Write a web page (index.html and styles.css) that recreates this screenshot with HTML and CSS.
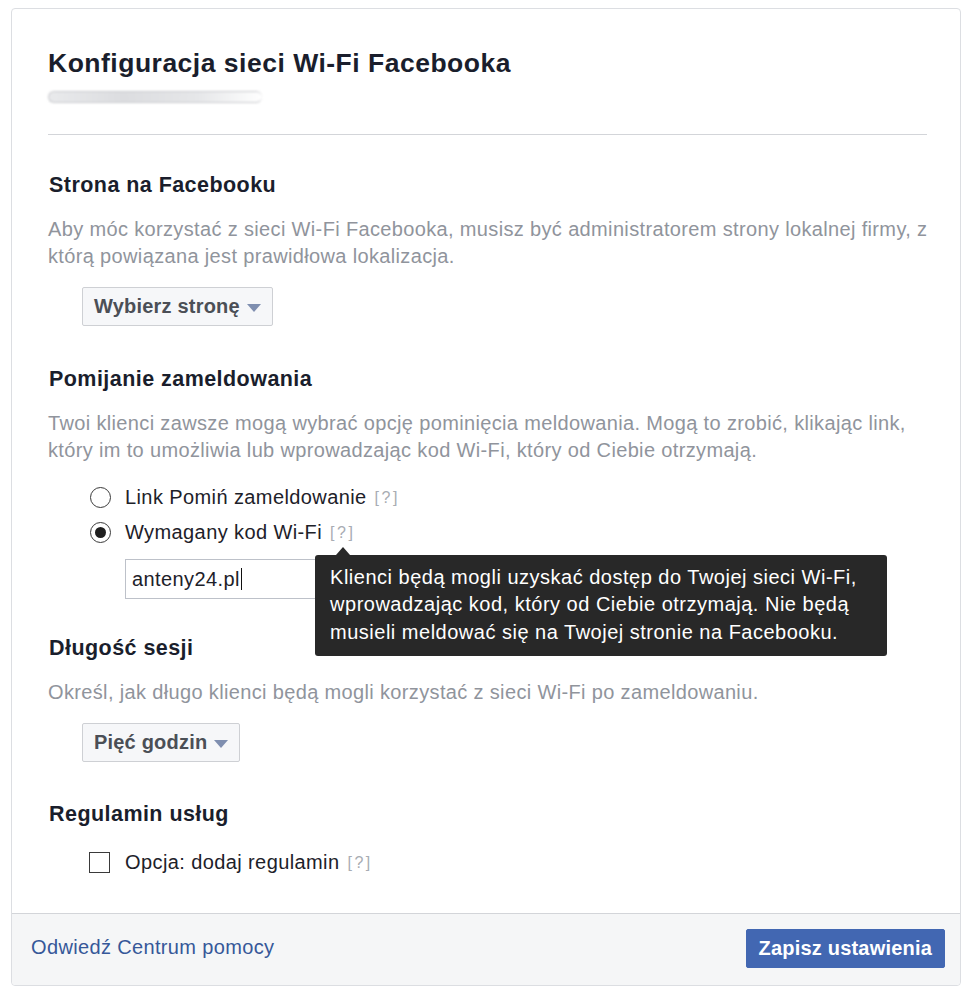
FILE: index.html
```html
<!DOCTYPE html>
<html lang="pl">
<head>
<meta charset="utf-8">
<title>Konfiguracja sieci Wi-Fi Facebooka</title>
<link rel="stylesheet" href="styles.css">
</head>
<body>
<div class="card">
  <div class="card-body">
    <div class="header">
      <h1 class="title">Konfiguracja sieci Wi-Fi Facebooka</h1>
      <div class="blurred"></div>
    </div>

    <section class="section first">
      <h2 class="section-title">Strona na Facebooku</h2>
      <p class="desc">Aby móc korzystać z sieci Wi-Fi Facebooka, musisz być administratorem strony lokalnej firmy, z którą powiązana jest prawidłowa lokalizacja.</p>
      <button class="dropdown">Wybierz stronę <span class="caret"></span></button>
    </section>

    <section class="section second">
      <h2 class="section-title">Pomijanie zameldowania</h2>
      <p class="desc">Twoi klienci zawsze mogą wybrać opcję pominięcia meldowania. Mogą to zrobić, klikając link, który im to umożliwia lub wprowadzając kod Wi-Fi, który od Ciebie otrzymają.</p>
      <div class="options">
        <label class="option">
          <span class="radio"></span>
          <span class="label">Link Pomiń zameldowanie</span>
          <span class="help">[?]</span>
        </label>
        <label class="option">
          <span class="radio checked"></span>
          <span class="label">Wymagany kod Wi-Fi</span>
          <span class="help anchor">[?]
            <span class="tooltip">Klienci będą mogli uzyskać dostęp do Twojej sieci Wi-Fi, wprowadzając kod, który od Ciebie otrzymają. Nie będą musieli meldować się na Twojej stronie na Facebooku.</span>
          </span>
        </label>
        <div class="code-input"><span class="code-text">anteny24.pl</span><span class="cursor"></span></div>
      </div>
    </section>

    <section class="section third">
      <h2 class="section-title">Długość sesji</h2>
      <p class="desc">Określ, jak długo klienci będą mogli korzystać z sieci Wi-Fi po zameldowaniu.</p>
      <button class="dropdown">Pięć godzin <span class="caret"></span></button>
    </section>

    <section class="section last">
      <h2 class="section-title">Regulamin usług</h2>
      <label class="option check-option">
        <span class="checkbox"></span>
        <span class="label">Opcja: dodaj regulamin</span>
        <span class="help">[?]</span>
      </label>
    </section>
  </div>

  <div class="footer">
    <a class="help-link" href="#">Odwiedź Centrum pomocy</a>
    <button class="primary">Zapisz ustawienia</button>
  </div>
</div>
</body>
</html>
```

FILE: styles.css
```css
* { box-sizing: border-box; }

body {
  margin: 0;
  background: #ffffff;
  font-family: "Liberation Sans", Arial, sans-serif;
  color: #1d2129;
}

.card {
  margin: 8px 0 0 11px;
  width: 950px;
  border: 1px solid #dcdee2;
  border-radius: 4px;
}

.card-body {
  padding: 39px 33px 0 36px;
}

.header {
  border-bottom: 1px solid #d3d5d9;
  padding-bottom: 31px;
}

.title {
  margin: 0;
  font-size: 26.5px;
  letter-spacing: 0.5px;
  line-height: 30px;
  font-weight: bold;
  color: #1a1e2c;
}

.blurred {
  margin-top: 13px;
  width: 214px;
  height: 12px;
  border-radius: 6px;
  border: 1.5px solid #c8c9cd;
  border-right: none;
  background: linear-gradient(to right, #e9eaec 0%, #dcdde0 35%, #e6e7e9 70%, #ffffff 100%);
  filter: blur(0.9px);
}

.section { padding-top: 36px; }
.section.first { padding-top: 38px; }
.section.second { padding-top: 41px; }
.section.third { padding-top: 37px; }
.section.last { padding-top: 40px; padding-bottom: 33px; }

.section-title {
  margin: 0 0 0 1px;
  font-size: 21.5px;
  letter-spacing: 0.45px;
  line-height: 24px;
  font-weight: bold;
  color: #1a1e2c;
}

.desc {
  margin: 19px -12px 0 0;
  font-size: 20px;
  letter-spacing: 0.35px;
  line-height: 27px;
  color: #90949c;
}

.dropdown {
  margin: 17px 0 0 34px;
  height: 39px;
  padding: 0 11px 0 11px;
  display: inline-flex;
  align-items: center;
  gap: 7px;
  font-family: inherit;
  font-size: 20px;
  letter-spacing: 0.2px;
  font-weight: bold;
  color: #4b4f56;
  background: #f6f7f9;
  border: 1px solid #ced0d4;
  border-radius: 2px;
}

.caret {
  width: 0;
  height: 0;
  border-left: 7px solid transparent;
  border-right: 7px solid transparent;
  border-top: 8px solid #7f8fb0;
  margin-top: 2px;
}

.options {
  margin-top: 16px;
  padding-left: 42px;
}

.option {
  display: flex;
  align-items: center;
  height: 35px;
  font-size: 20px;
  letter-spacing: 0.4px;
}

.radio {
  flex: none;
  width: 21px;
  height: 21px;
  border: 1.5px solid #3a3a3a;
  border-radius: 50%;
  background: #fff;
  display: flex;
  align-items: center;
  justify-content: center;
}
.radio.checked::after {
  content: "";
  width: 11px;
  height: 11px;
  border-radius: 50%;
  background: #1f1f1f;
}

.label {
  margin-left: 14px;
  color: #1d2129;
}

.help {
  margin-left: 8px;
  font-size: 16px;
  color: #a8acb3;
  letter-spacing: 2.5px;
}

.anchor { position: relative; }

.tooltip {
  position: absolute;
  left: -15px;
  top: 31px;
  width: 572px;
  padding: 9px 10px 10px 15px;
  background: #282828;
  border-radius: 3px;
  color: #ffffff;
  font-size: 20px;
  letter-spacing: 0.5px;
  line-height: 27.5px;
  z-index: 10;
}
.tooltip::before {
  content: "";
  position: absolute;
  left: 21px;
  top: -8px;
  border-left: 7px solid transparent;
  border-right: 7px solid transparent;
  border-bottom: 8px solid #282828;
}

.code-input {
  margin: 9px 0 0 35px;
  width: 300px;
  height: 40px;
  border: 1px solid #bdc1c9;
  display: flex;
  align-items: center;
  padding-left: 6px;
  font-size: 20px;
  letter-spacing: 0.4px;
  color: #1d2129;
}
.cursor {
  width: 1.5px;
  height: 22px;
  background: #111;
  margin-left: 1px;
}

.check-option {
  margin-top: 19px;
  margin-left: 41px;
}
.checkbox {
  flex: none;
  width: 21px;
  height: 21px;
  border: 1.5px solid #3a3a3a;
  background: #fff;
}
.check-option .label { margin-left: 15px; }

.footer {
  border-top: 1px solid #d3d5d9;
  background: #f5f6f7;
  height: 72px;
  padding: 0 15px 0 19px;
  display: flex;
  align-items: center;
  justify-content: space-between;
  border-radius: 0 0 4px 4px;
}

.help-link {
  margin-top: -5px;
  font-size: 20px;
  letter-spacing: 0.35px;
  color: #365899;
  text-decoration: none;
}

.primary {
  margin-top: -2px;
  height: 39px;
  padding: 0 12px;
  font-family: inherit;
  font-size: 20px;
  letter-spacing: 0.2px;
  font-weight: bold;
  color: #ffffff;
  background: #4267b2;
  border: 1px solid #4267b2;
  border-radius: 2px;
}
```
